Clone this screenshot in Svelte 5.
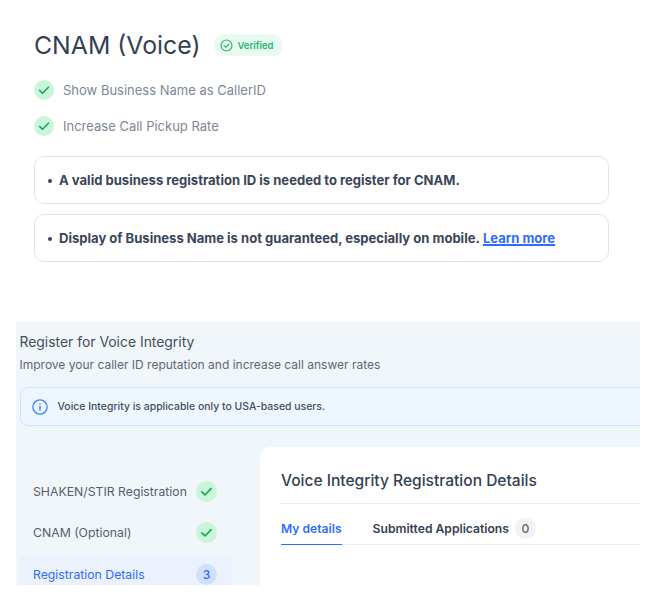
<script lang="ts">
	const perks = ['Show Business Name as CallerID', 'Increase Call Pickup Rate'];
	const steps = [
		{ name: 'SHAKEN/STIR Registration', done: true },
		{ name: 'CNAM (Optional)', done: true },
		{ name: 'Registration Details', done: false, num: 3 }
	];
</script>

{#snippet check(size)}
	<svg class="check" width={size} height={size} viewBox="0 0 20 20" fill="none">
		<circle cx="10" cy="10" r="10" fill="#c9f5d9" />
		<path d="M5.6 10.4 8.6 13.3 14.4 7.2" stroke="#22a35f" stroke-width="1.6" stroke-linecap="round" stroke-linejoin="round" />
	</svg>
{/snippet}

<section class="cnam">
	<div class="head">
		<h1>CNAM (Voice)</h1>
		<span class="verified">
			<svg width="13" height="13" viewBox="0 0 14 14" fill="none">
				<circle cx="7" cy="7" r="5.9" stroke="#22b573" stroke-width="1.2" />
				<path d="M4.5 7.2 6.3 9 9.6 5.3" stroke="#22b573" stroke-width="1.2" stroke-linecap="round" stroke-linejoin="round" />
			</svg>
			Verified
		</span>
	</div>

	<ul class="perks">
		{#each perks as perk}
			<li>{@render check(20)}<span>{perk}</span></li>
		{/each}
	</ul>

	<div class="note"><i></i>A valid business registration ID is needed to register for CNAM.</div>
	<div class="note"><i></i>Display of Business Name is not guaranteed, especially on mobile.&nbsp;<a href="#learn">Learn more</a></div>
</section>

<section class="panel">
	<h2>Register for Voice Integrity</h2>
	<p class="sub">Improve your caller ID reputation and increase call answer rates</p>

	<div class="info">
		<svg width="16" height="16" viewBox="0 0 16 16" fill="none">
			<circle cx="8" cy="8" r="7.1" stroke="#3b82f6" stroke-width="1.3" />
			<path d="M8 7.4V11.2" stroke="#3b82f6" stroke-width="1.4" stroke-linecap="round" />
			<circle cx="8" cy="5" r="0.85" fill="#3b82f6" />
		</svg>
		Voice Integrity is applicable only to USA-based users.
	</div>

	<div class="body">
		<nav>
			{#each steps as step}
				<div class="step" class:active={!step.done}>
					<span>{step.name}</span>
					{#if step.done}
						{@render check(21)}
					{:else}
						<b class="num">{step.num}</b>
					{/if}
				</div>
			{/each}
		</nav>

		<div class="main">
			<h3>Voice Integrity Registration Details</h3>
			<div class="tabs">
				<span class="tab current">My details</span>
				<span class="tab">Submitted Applications <b>0</b></span>
			</div>
		</div>
	</div>
</section>

<style>
	:global(body) {
		background: #fff;
		font-family: Inter, 'Liberation Sans', sans-serif;
	}

	.cnam {
		padding: 30px 52px 0 34px;
	}

	.head {
		display: flex;
		align-items: center;
		gap: 14px;
		height: 30px;
	}

	h1 {
		margin: 0;
		font-size: 24.8px;
		font-weight: 400;
		line-height: 30px;
		color: #333f52;
	}

	.verified {
		display: inline-flex;
		align-items: center;
		gap: 4px;
		height: 22px;
		padding: 0 9px 0 6px;
		border-radius: 11px;
		background: #e9fbf0;
		color: #22b573;
		font-size: 9.5px;
		font-weight: 600;
	}

	.perks {
		list-style: none;
		margin: 20px 0 0;
		padding: 0;
		display: flex;
		flex-direction: column;
		gap: 16px;
	}

	.perks li {
		display: flex;
		align-items: center;
		gap: 9px;
		height: 20px;
		font-size: 13px;
		color: #7d8796;
	}

	.check {
		flex: none;
		display: block;
	}

	.note {
		display: flex;
		align-items: center;
		box-sizing: border-box;
		height: 47.5px;
		margin-top: 10.5px;
		padding-left: 13px;
		border: 1px solid #dfe3ea;
		border-radius: 10px;
		font-size: 13.05px;
		font-weight: 700;
		color: #3a4559;
		white-space: nowrap;
	}

	.perks + .note {
		margin-top: 20px;
	}

	.note i {
		width: 4px;
		height: 4px;
		margin: 2px 7px 0 0;
		border-radius: 50%;
		background: #3a4559;
	}

	.note a {
		color: #2f6bff;
		text-decoration: underline;
		text-decoration-thickness: 2px;
	}

	.panel {
		box-sizing: border-box;
		width: 624px;
		height: 263px;
		margin: 60.5px 0 0 16px;
		padding: 10px 0 0 3.5px;
		background: #f1f6fa;
		overflow: hidden;
	}

	h2 {
		margin: 0;
		font-size: 13.9px;
		font-weight: 400;
		line-height: 20px;
		color: #444e5e;
	}

	.sub {
		margin: 3px 0 0;
		font-size: 12px;
		line-height: 20px;
		color: #5f6875;
	}

	.info {
		display: flex;
		align-items: center;
		gap: 10px;
		box-sizing: border-box;
		width: 640px;
		height: 39px;
		margin-top: 12px;
		padding-left: 11px;
		border: 1px solid #cfe2fb;
		border-radius: 8px;
		background: #eef6ff;
		font-size: 10.45px;
		font-weight: 500;
		color: #444e5e;
		white-space: nowrap;
	}

	.body {
		display: flex;
		margin-top: 21px;
	}

	nav {
		width: 213px;
		flex: none;
		margin-left: -0.5px;
		padding-top: 26px;
	}

	.step {
		display: flex;
		align-items: center;
		justify-content: space-between;
		height: 36px;
		margin-bottom: 5px;
		padding: 0 15px 0 14px;
		border-radius: 6px;
		font-size: 12.25px;
		color: #565f6d;
	}

	.step.active {
		color: #2f6bff;
		background: #ebf2fe;
		margin-top: 6px;
	}

	.num {
		display: grid;
		place-items: center;
		width: 21px;
		height: 21px;
		border-radius: 50%;
		background: #cfe0fd;
		font-size: 12px;
		font-weight: 500;
	}

	.main {
		flex: none;
		width: 420px;
		height: 200px;
		margin-left: 28px;
		padding: 0 0 0 21px;
		box-sizing: border-box;
		background: #fff;
		border-radius: 10px 0 0 0;
	}

	h3 {
		margin: 0;
		height: 57px;
		line-height: 67px;
		box-sizing: border-box;
		font-size: 15.55px;
		font-weight: 500;
		color: #333f52;
		border-bottom: 1px solid #e9ecf1;
	}

	.tabs {
		display: flex;
		gap: 31px;
		height: 40px;
		border-bottom: 1px solid #e9ecf1;
	}

	.tab {
		display: flex;
		align-items: center;
		gap: 6px;
		height: 41px;
		padding-top: 8px;
		box-sizing: border-box;
		font-size: 12.15px;
		font-weight: 600;
		color: #333f52;
	}

	.tab.current {
		color: #2f6bff;
		box-shadow: inset 0 -1px 0 #2f6bff;
	}

	.tab b {
		display: grid;
		place-items: center;
		width: 21px;
		height: 21px;
		border-radius: 50%;
		background: #f1f2f6;
		font-weight: 500;
		color: #5f6875;
	}
</style>
